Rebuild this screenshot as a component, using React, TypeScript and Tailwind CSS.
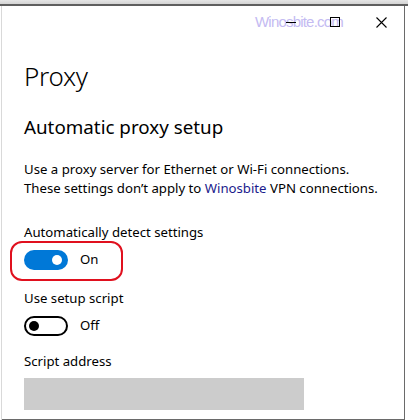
import React from "react";

const font = { fontFamily: '"Noto Sans", "Open Sans", Arial, sans-serif' };

function Toggle({ on }: { on: boolean }) {
  return on ? (
    <div className="w-[44px] h-[20px] rounded-full bg-[#0078d7] flex items-center justify-end pr-[6px]">
      <div className="w-[10px] h-[10px] rounded-full bg-white" />
    </div>
  ) : (
    <div className="w-[44px] h-[20px] rounded-full border-2 border-black flex items-center pl-[3px]">
      <div className="w-[10px] h-[10px] rounded-full bg-black" />
    </div>
  );
}

export default function App() {
  return (
    <div className="w-[408px] h-[420px] bg-white relative overflow-hidden text-black" style={font}>
      <div className="h-[4px] bg-gradient-to-b from-[#e6e6e6] to-[#d4d4d4]" />
      <div className="h-[2px] bg-[#5f5f5f]" />
      <div className="flex h-[414px]">
        <div className="w-[1px]" />
        <div className="w-[1px] bg-[#d9d9d9]" />
        <div className="w-[403px] flex flex-col border-r border-b border-[#6a6a6a] relative">
          <div
            className="absolute left-[253px] top-[8px] text-[15px] tracking-[-0.8px] text-[#c4bbf2] leading-none"
            style={{ fontFamily: '"Liberation Sans", Arial, sans-serif' }}
          >
            Winosbite.com
          </div>
          <div className="h-[32px] flex items-center justify-end relative">
            <div className="w-[10px] h-[1px] bg-black mr-[34px]" />
            <div className="w-[10px] h-[10px] border border-black mr-[36px]" />
            <svg width="11" height="11" viewBox="0 0 11 11" className="mr-[17px]">
              <path d="M0.5 0.5 L10.5 10.5 M10.5 0.5 L0.5 10.5" stroke="black" strokeWidth="1.1" fill="none" />
            </svg>
          </div>
          <div className="pl-[22px] flex flex-col">
            <div className="text-[26px] font-light tracking-[-0.3px] leading-[34px] mt-[21px]">Proxy</div>
            <div className="text-[18.8px] leading-[26px] mt-[21px]">Automatic proxy setup</div>
            <div className="text-[13.2px] leading-[19px] mt-[20px]">
              <div>Use a proxy server for Ethernet or Wi-Fi connections.</div>
              <div>
                These settings don’t apply to <span className="text-[#1a1a8c]">Winosbite</span> VPN connections.
              </div>
            </div>
            <div className="text-[13.2px] leading-[20px] mt-[24px]">Automatically detect settings</div>
            <div className="flex items-center mt-[8px] relative">
              <Toggle on />
              <span className="text-[13.2px] ml-[12px]">On</span>
              <div className="absolute left-[-14px] top-[-9px] w-[113px] h-[40px] border-2 border-[#e0101e] rounded-[12px]" />
            </div>
            <div className="text-[13.2px] leading-[20px] mt-[18px]">Use setup script</div>
            <div className="flex items-center mt-[8px]">
              <Toggle on={false} />
              <span className="text-[13.2px] ml-[12px]">Off</span>
            </div>
            <div className="text-[13.2px] leading-[20px] mt-[15px]">Script address</div>
            <div className="w-[280px] h-[32px] bg-[#cccccc] mt-[7px]" />
          </div>
        </div>
      </div>
    </div>
  );
}
